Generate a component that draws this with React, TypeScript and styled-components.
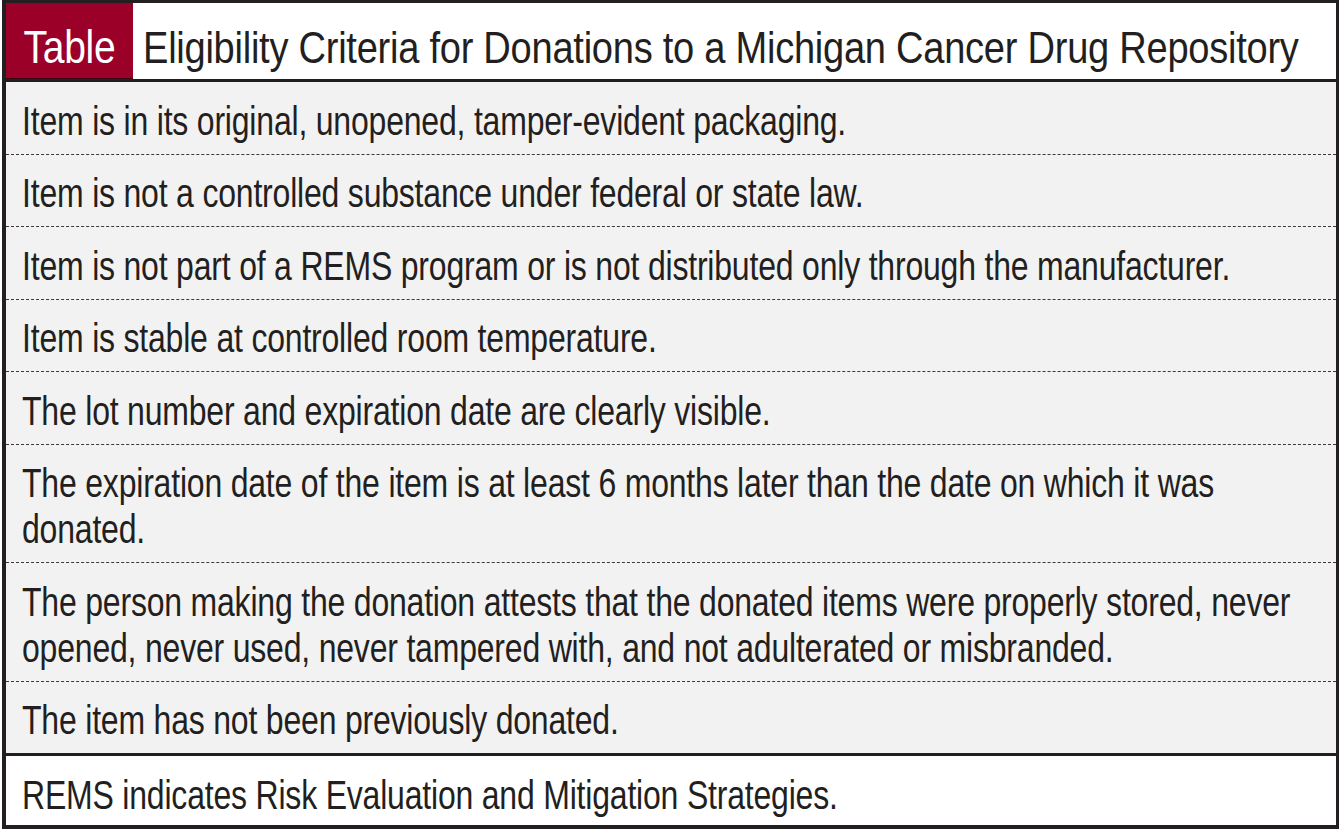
import React from "react";
import styled, { createGlobalStyle } from "styled-components";

const Global = createGlobalStyle`
  html, body { margin: 0; padding: 0; background: #ffffff; }
  body { font-family: "Liberation Sans", Arial, sans-serif; color: #231f20; }
`;

const Frame = styled.div`
  box-sizing: border-box;
  width: 1337px;
  margin-left: 2px;
  border: 3px solid #231f20;
  border-left-width: 4px;
  border-bottom-width: 4px;
  background: #ffffff;
  overflow: hidden;
`;

const Header = styled.div`
  display: flex;
  align-items: stretch;
  height: 79px;
  border-bottom: 3px solid #231f20;
  box-sizing: border-box;
  overflow: hidden;
`;

const Tag = styled.div`
  flex: 0 0 127px;
  box-sizing: border-box;
  background: #9b0029;
  color: #ffffff;
  display: flex;
  justify-content: center;
  padding-top: 20px;
  border-bottom: 1px solid #3a0010;
`;

const Title = styled.div`
  padding: 23px 0 0 10px;
  white-space: nowrap;
`;

/* Condensed type: the reference face is a condensed grotesque, narrowed here by a horizontal scale. */
const Squeeze = styled.span<{ $scale: number; $size: number; $origin?: string }>`
  display: inline-block;
  font-size: ${(p) => p.$size}px;
  line-height: ${(p) => p.$size}px;
  letter-spacing: -0.3px;
  transform: scaleX(${(p) => p.$scale});
  transform-origin: ${(p) => p.$origin ?? "left center"};
`;

const Body = styled.div`
  background: #f2f2f2;
`;

const Row = styled.div`
  padding: 15.5px 16px 10px 16px;
  border-bottom: 1px dashed #3c3a3b;
  overflow: hidden;
  &:last-child { border-bottom: none; }
`;

const Footer = styled.div`
  border-top: 3px solid #231f20;
  padding: 16px 16px 7px 16px;
  overflow: hidden;
`;

const Text = styled.div`
  width: 125%;
  font-size: 40px;
  line-height: 46px;
  letter-spacing: -0.25px;
  transform: scaleX(0.8);
  transform-origin: left top;
`;

const rows = [
  "Item is in its original, unopened, tamper-evident packaging.",
  "Item is not a controlled substance under federal or state law.",
  "Item is not part of a REMS program or is not distributed only through the manufacturer.",
  "Item is stable at controlled room temperature.",
  "The lot number and expiration date are clearly visible.",
  "The expiration date of the item is at least 6 months later than the date on which it was donated.",
  "The person making the donation attests that the donated items were properly stored, never opened, never used, never tampered with, and not adulterated or misbranded.",
  "The item has not been previously donated.",
];

export default function App() {
  return (
    <>
      <Global />
      <Frame>
        <Header>
          <Tag>
            <Squeeze $scale={0.83} $size={47} $origin="center center">
              Table
            </Squeeze>
          </Tag>
          <Title>
            <Squeeze $scale={0.865} $size={44}>
              Eligibility Criteria for Donations to a Michigan Cancer Drug Repository
            </Squeeze>
          </Title>
        </Header>
        <Body>
          {rows.map((r) => (
            <Row key={r}>
              <Text>{r}</Text>
            </Row>
          ))}
        </Body>
        <Footer>
          <Text>REMS indicates Risk Evaluation and Mitigation Strategies.</Text>
        </Footer>
      </Frame>
    </>
  );
}
